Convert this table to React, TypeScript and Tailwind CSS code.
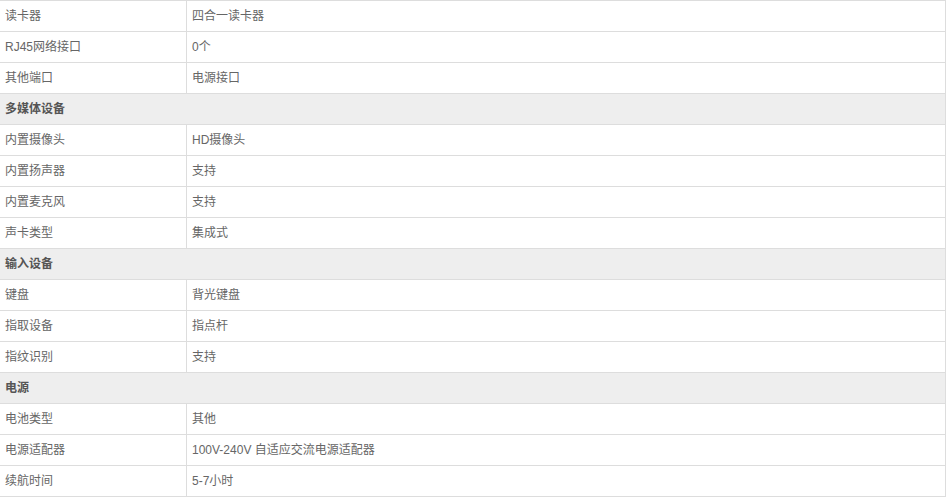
import React from 'react';

type Row = { label: string; value?: string; section?: boolean };

const rows: Row[] = [
  { label: '读卡器', value: '四合一读卡器' },
  { label: 'RJ45网络接口', value: '0个' },
  { label: '其他端口', value: '电源接口' },
  { label: '多媒体设备', section: true },
  { label: '内置摄像头', value: 'HD摄像头' },
  { label: '内置扬声器', value: '支持' },
  { label: '内置麦克风', value: '支持' },
  { label: '声卡类型', value: '集成式' },
  { label: '输入设备', section: true },
  { label: '键盘', value: '背光键盘' },
  { label: '指取设备', value: '指点杆' },
  { label: '指纹识别', value: '支持' },
  { label: '电源', section: true },
  { label: '电池类型', value: '其他' },
  { label: '电源适配器', value: '100V-240V 自适应交流电源适配器' },
  { label: '续航时间', value: '5-7小时' },
];

export default function App() {
  return (
    <div
      className="w-[946px] bg-white text-[12px] text-[#666] border-t border-r border-[#ddd]"
      style={{ fontFamily: '"Liberation Sans", "Noto Sans CJK SC", sans-serif' }}
    >
      {rows.map((row, i) =>
        row.section ? (
          <div key={i} className="h-[31px] flex items-center px-[5px] bg-[#eee] border-b border-[#ddd] font-bold text-[#555]">
            {row.label}
          </div>
        ) : (
          <div key={i} className="h-[31px] flex border-b border-[#ddd]">
            <div className="w-[187px] shrink-0 flex items-center px-[5px] border-r border-[#ddd]">{row.label}</div>
            <div className="flex-1 flex items-center px-[5px]">{row.value}</div>
          </div>
        )
      )}
    </div>
  );
}
